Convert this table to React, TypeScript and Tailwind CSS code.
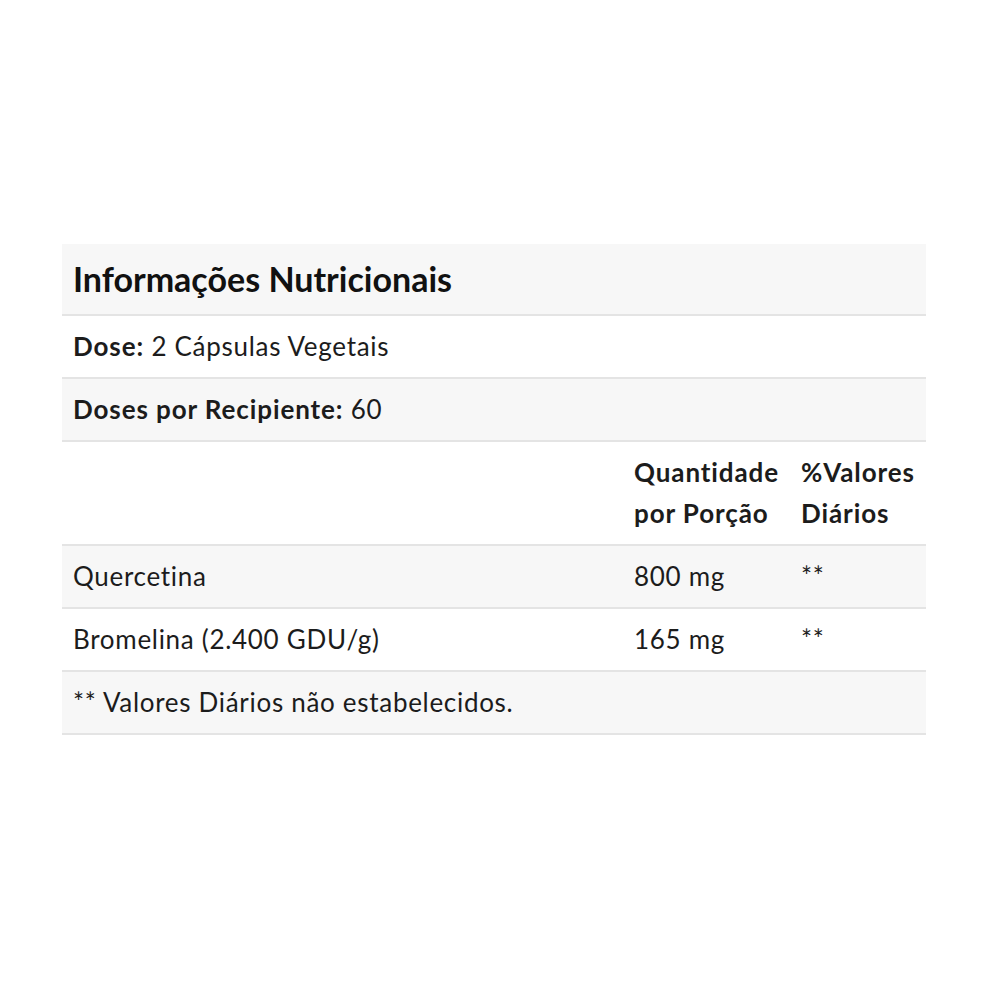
const rows = [
  { name: "Quercetina", qty: "800 mg", dv: "**" },
  { name: "Bromelina (2.400 GDU/g)", qty: "165 mg", dv: "**" },
];

export default function App() {
  return (
    <div
      className="w-[1000px] h-[1000px] bg-white pt-[244px] px-[62px] text-[#1c1c1c]"
      style={{ fontFamily: "Lato, 'Open Sans', sans-serif" }}
    >
      <table className="w-[864px] border-collapse text-[26px] leading-[41px] tracking-[0.7px]">
        <tbody>
          <tr className="bg-[#f7f7f7] border-b-2 border-[#e4e4e4]">
            <td colSpan={3} className="px-[11px] py-[10px] text-[34px] leading-[50px] font-bold tracking-normal text-[#111]">
              Informações Nutricionais
            </td>
          </tr>
          <tr className="border-b-2 border-[#e4e4e4]">
            <td colSpan={3} className="px-[11px] py-[10px]">
              <b className="tracking-[0.9px]">Dose:</b> 2 Cápsulas Vegetais
            </td>
          </tr>
          <tr className="bg-[#f7f7f7] border-b-2 border-[#e4e4e4]">
            <td colSpan={3} className="px-[11px] py-[10px]">
              <b className="tracking-[0.9px]">Doses por Recipiente:</b> 60
            </td>
          </tr>
          <tr className="border-b-2 border-[#e4e4e4] font-bold tracking-[0.9px]">
            <td className="w-[561px] px-[11px] py-[10px]"></td>
            <td className="w-[167px] px-[11px] py-[10px]">
              Quantidade
              <br />
              por Porção
            </td>
            <td className="px-[11px] py-[10px]">
              %Valores
              <br />
              Diários
            </td>
          </tr>
          {rows.map((r, i) => (
            <tr
              key={r.name}
              className={`border-b-2 border-[#e4e4e4] ${i % 2 === 0 ? "bg-[#f7f7f7]" : ""}`}
            >
              <td className="px-[11px] py-[10px]">{r.name}</td>
              <td className="px-[11px] py-[10px]">{r.qty}</td>
              <td className="px-[11px] py-[10px] align-top">{r.dv}</td>
            </tr>
          ))}
          <tr className="bg-[#f7f7f7] border-b-2 border-[#e4e4e4]">
            <td colSpan={3} className="px-[11px] py-[10px]">
              ** Valores Diários não estabelecidos.
            </td>
          </tr>
        </tbody>
      </table>
    </div>
  );
}
